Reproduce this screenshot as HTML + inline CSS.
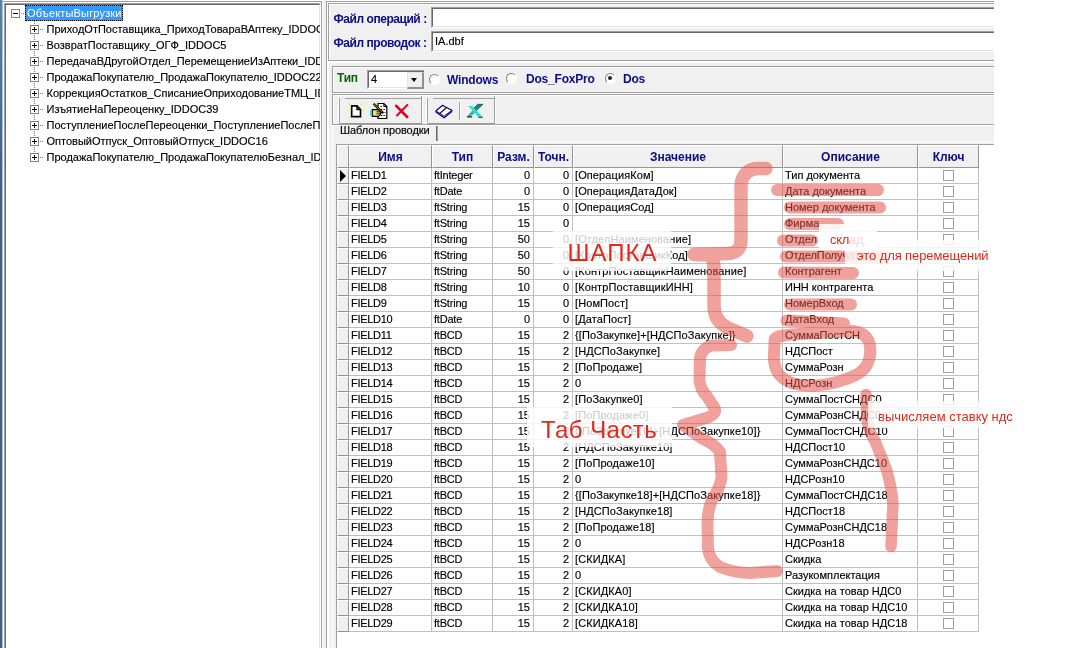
<!DOCTYPE html>
<html><head><meta charset="utf-8"><title>Export objects</title>
<style>
*{box-sizing:border-box}
html,body{margin:0;padding:0}
body{width:1070px;height:648px;position:relative;overflow:hidden;background:#fff;font-family:"Liberation Sans",sans-serif;font-size:11px;color:#000}
div,i,span{position:absolute}
i{display:block}
.strip{left:0;top:0;width:2px;height:648px;background:linear-gradient(#5a84ab,#3d6182 30%)}
.strip2{left:2px;top:0;width:1px;height:648px;background:#a9bfd2}
/* frame around tree */
.lframe{left:3px;top:1px;width:319px;height:660px;border-top:1px solid #a0a0a0;border-right:1px solid #a0a0a0}
.tree{left:4px;top:3px;width:317px;height:660px;border-top:1px solid #a0a0a0;border-left:1px solid #a0a0a0;border-right:1px solid #fff;background:#fff;overflow:hidden}
.tree:before{content:"";position:absolute;left:0;top:0;right:0;bottom:0;border-top:1px solid #696969;border-left:1px solid #696969;border-right:1px solid #e3e3e3}
/* inside tree coords are page coords minus (5,4) -> we offset children by wrapper */
.tree>div{margin-left:-5px;margin-top:-4px}
.box{width:9px;height:9px;border:1px solid #848484;background:#fff}
.box .h{left:1px;top:3px;width:5px;height:1px;background:#000}
.box .v{left:3px;top:1px;width:1px;height:5px;background:#000}
.hdots{height:1px;background-image:linear-gradient(90deg,#808080 50%,transparent 50%);background-size:2px 1px}
.vdots{width:1px;background-image:linear-gradient(#808080 50%,transparent 50%);background-size:1px 2px}
.ti{left:46.5px;height:16px;line-height:16px;white-space:nowrap}
.sel{height:16px;line-height:14px;padding:0 2px 0 1px;background:#3399ff;color:#fff;border:1px dotted #000;white-space:nowrap;width:98px;letter-spacing:0.17px}
/* right */
.rframe{left:326px;top:1px;width:668px;height:660px;border-top:1px solid #a0a0a0;border-left:1px solid #a0a0a0;background:#fff}
.rbg{left:329px;top:63px;width:665px;height:600px;background:#f0f0f0}
.p1{left:328px;top:3px;width:666px;height:58px;background:#f0f0f0;border-top:1px solid #a0a0a0;border-left:1px solid #a0a0a0;border-bottom:1px solid #a0a0a0}
.p1:before,.p2:before,.p3:before{content:"";position:absolute;left:0;top:0;right:0;bottom:0;border-top:1px solid #fff;border-left:1px solid #fff}
.p2{left:332px;top:66px;width:662px;height:27px;background:#f0f0f0;border-top:1px solid #a0a0a0;border-left:1px solid #a0a0a0;border-bottom:1px solid #a0a0a0}
.p3{left:332px;top:94px;width:662px;height:31px;background:#f0f0f0;border-top:1px solid #a0a0a0;border-left:1px solid #a0a0a0;border-bottom:1px solid #a0a0a0}
.split{left:323px;top:0;width:3px;height:648px;background:#f0f0f0}
.lbl{font-weight:bold;font-size:12px;color:#0c0c84;white-space:nowrap;letter-spacing:-0.45px;line-height:14px}
.inp{background:#fff;border-top:1px solid #a0a0a0;border-left:1px solid #a0a0a0;border-bottom:1px solid #fff;height:21px}
.inp:before{content:"";position:absolute;left:0;top:0;right:0;bottom:0;border-top:1px solid #696969;border-left:1px solid #696969;border-bottom:1px solid #e3e3e3}
.inp span{left:3px;top:3px;line-height:13px;white-space:nowrap}
.radio{width:11px;height:11px;border-radius:50%;background:#fff;border:1.5px solid #fbfbfb;border-top-color:#868686;border-left-color:#868686;transform:rotate(0deg)}
.radio.on:after{content:"";position:absolute;left:2px;top:2px;width:4px;height:4px;border-radius:50%;background:#222}
.vline{width:1px;background:#a0a0a0}
.hline{height:1px;background:#a0a0a0}
/* tabs */
.tabtxt{left:340px;top:123px;line-height:14px;white-space:nowrap;letter-spacing:-0.1px}
/* grid */
.grid{left:0;top:0;width:0;height:0}
.gridbg{left:336px;top:144px;width:658px;height:520px;background:#fff;border-top:1px solid #a0a0a0;border-left:1px solid #a0a0a0}
.hc{top:145px;height:23px;background:#f0f0f0;border-right:1px solid #949494;border-bottom:1px solid #949494;border-top:1px solid #fff;border-left:1px solid #fff;font-weight:bold;font-size:12px;color:#0c0c84;text-align:center;line-height:23px;white-space:nowrap}
.row{left:0;height:16px;width:994px}
.ind{top:0;height:16px;background:#f0f0f0;border-right:1px solid #949494;border-bottom:1px solid #949494;border-left:1px solid #fff;border-top:1px solid #fff}
.arr{left:2px;top:1px;width:0;height:0;border-left:6px solid #000;border-top:6px solid transparent;border-bottom:6px solid transparent}
.c{top:0;height:16px;border-right:1px solid #c0c0c0;border-bottom:1px solid #c0c0c0;overflow:hidden;white-space:nowrap;line-height:15px}
.c span{position:static}
.c.l{padding-left:2px}
.c.n{letter-spacing:-0.3px}
.c.t{letter-spacing:-0.2px}
.c.v{letter-spacing:0.1px}
.c.r{text-align:right;padding-right:3px}
.c.l{text-align:left}
.cb{left:25px;top:2px;width:11px;height:11px;border:1px solid #a0a0a0;background:#fff}
.note{color:#e2281c;white-space:nowrap;line-height:1.2}
#app{left:0;top:0;width:1070px;height:648px;overflow:hidden;will-change:transform}
.ti,.c,.tabtxt,.inp span{-webkit-text-stroke:0.15px #000}

</style></head><body><div id="app">

<div class="strip"></div><div class="strip2"></div>
<div class="lframe"></div>
<div class="tree">
<div class="vdots" style="left:34px;top:21px;height:137px"></div>
<div class="box" style="left:11px;top:9px"><i class="h"></i></div>
<div class="hdots" style="left:21px;top:13px;width:4px"></div>
<div class="sel" style="left:25px;top:5px">ОбъектыВыгрузки</div>
<div class="box" style="left:30px;top:25px"><i class="h"></i><i class="v"></i></div>
<div class="hdots" style="left:40px;top:29px;width:4px"></div>
<div class="ti" style="top:21px">ПриходОтПоставщика_ПриходТовараВАптеку_IDDOC11</div>
<div class="box" style="left:30px;top:41px"><i class="h"></i><i class="v"></i></div>
<div class="hdots" style="left:40px;top:45px;width:4px"></div>
<div class="ti" style="top:37px">ВозвратПоставщику_ОГФ_IDDOC5</div>
<div class="box" style="left:30px;top:57px"><i class="h"></i><i class="v"></i></div>
<div class="hdots" style="left:40px;top:61px;width:4px"></div>
<div class="ti" style="top:53px">ПередачаВДругойОтдел_ПеремещениеИзАптеки_IDDOC</div>
<div class="box" style="left:30px;top:73px"><i class="h"></i><i class="v"></i></div>
<div class="hdots" style="left:40px;top:77px;width:4px"></div>
<div class="ti" style="top:69px">ПродажаПокупателю_ПродажаПокупателю_IDDOC22</div>
<div class="box" style="left:30px;top:89px"><i class="h"></i><i class="v"></i></div>
<div class="hdots" style="left:40px;top:93px;width:4px"></div>
<div class="ti" style="top:85px">КоррекцияОстатков_СписаниеОприходованиеТМЦ_IDDOC</div>
<div class="box" style="left:30px;top:105px"><i class="h"></i><i class="v"></i></div>
<div class="hdots" style="left:40px;top:109px;width:4px"></div>
<div class="ti" style="top:101px">ИзъятиеНаПереоценку_IDDOC39</div>
<div class="box" style="left:30px;top:121px"><i class="h"></i><i class="v"></i></div>
<div class="hdots" style="left:40px;top:125px;width:4px"></div>
<div class="ti" style="top:117px">ПоступлениеПослеПереоценки_ПоступлениеПослеПереоценки</div>
<div class="box" style="left:30px;top:137px"><i class="h"></i><i class="v"></i></div>
<div class="hdots" style="left:40px;top:141px;width:4px"></div>
<div class="ti" style="top:133px">ОптовыйОтпуск_ОптовыйОтпуск_IDDOC16</div>
<div class="box" style="left:30px;top:153px"><i class="h"></i><i class="v"></i></div>
<div class="hdots" style="left:40px;top:157px;width:4px"></div>
<div class="ti" style="top:149px">ПродажаПокупателю_ПродажаПокупателюБезнал_IDDOC</div>
</div>
<div class="split"></div>
<div class="rframe"></div>
<div class="rbg"></div>
<div class="p1"></div>
<div class="lbl" style="left:333.5px;top:12px">Файл операций :</div>
<div class="lbl" style="left:333.5px;top:36px">Файл проводок :</div>
<div class="inp" style="left:431px;top:7px;width:563px"></div>
<div class="inp" style="left:431px;top:31px;width:563px"><span>IA.dbf</span></div>
<div class="p2"></div>
<div class="lbl" style="left:337px;top:71px;color:#006800;letter-spacing:-0.2px">Тип</div>
<div class="inp" style="left:367px;top:70px;width:57px;height:19px"><span style="left:3px;top:2px">4</span>
 <div style="left:39px;top:1px;width:17px;height:17px;background:#f0f0f0;border:1px solid #e3e3e3;border-right:2px solid #909090;border-bottom:2px solid #909090"><i style="left:3px;top:5px;width:0;height:0;border-top:4px solid #000;border-left:3.5px solid transparent;border-right:3.5px solid transparent"></i></div>
</div>
<div class="radio" style="left:429px;top:73.5px"></div>
<div class="lbl" style="left:447px;top:73px;letter-spacing:-0.2px">Windows</div>
<div class="radio" style="left:506px;top:72.5px"></div>
<div class="lbl" style="left:526px;top:72px;letter-spacing:-0.2px">Dos_FoxPro</div>
<div class="radio on" style="left:605px;top:72.5px"></div>
<div class="lbl" style="left:623px;top:72px;letter-spacing:-0.2px">Dos</div>
<div class="hline" style="left:332px;top:93px;width:662px;background:#fff"></div>
<div class="p3"></div>
<div class="hline" style="left:333px;top:125px;width:661px;background:#fff"></div>
<div class="hline" style="left:339px;top:123px;width:83px;background:#989898"></div>
<div class="hline" style="left:427px;top:123px;width:68px;background:#989898"></div>
<!-- toolbar group 1 -->
<div class="vline" style="left:338px;top:98px;height:24px;background:#fff"></div>
<div class="vline" style="left:339px;top:98px;height:24px"></div>
<div class="hline" style="left:345px;top:98px;width:76px"></div>
<div class="vline" style="left:421px;top:96px;height:27px"></div>
<div class="vline" style="left:422px;top:96px;height:27px;background:#fff"></div>
<!-- toolbar group 2 -->
<div class="vline" style="left:426px;top:98px;height:24px;background:#fff"></div>
<div class="vline" style="left:427px;top:98px;height:24px"></div>
<div class="hline" style="left:433px;top:98px;width:61px"></div>
<div class="vline" style="left:494px;top:96px;height:27px"></div>
<div class="vline" style="left:495px;top:96px;height:27px;background:#fff"></div>
<div class="vline" style="left:459px;top:102px;height:18px"></div>
<div class="vline" style="left:460px;top:102px;height:18px;background:#fff"></div>
<!-- icons -->
<svg style="position:absolute;left:344px;top:98px" width="150" height="26" viewBox="344 98 150 26">
 <!-- new doc -->
 <g stroke="#eaf27a" stroke-width="1.6" stroke-linecap="round" opacity=".85"><path d="M348.600 103l2 2.200M362.800 103l-2.200 2.600M347.300 110.500h2.600M362.300 110.500h2M349 118l1.500-1.500M362 117.500l.8 .8"/></g>
 <path d="M351.700 105.900h5.300l3.500 3.700v7h-8.800z" fill="#fff" stroke="#000" stroke-width="1.600" stroke-linejoin="miter"/>
 <path d="M357 105.900v3.700h3.500" fill="none" stroke="#000" stroke-width="1.400"/>
 <!-- edit doc -->
 <path d="M378 103.500h5.800l3 3v12h-8.800z" fill="#fff" stroke="#000" stroke-width="1.200"/>
 <path d="M383.800 103.500v3h3" fill="none" stroke="#000" stroke-width="1"/>
 <path d="M380.500 106.500h2M381 109.500h4.500M382 112.500h3.500M381 115.500h4.500" stroke="#000" stroke-width="1" stroke-dasharray="1.300 1.200"/>
 <path d="M372.300 109.600h5.700l2.600 1.600v3.200l-2 2h-6.300z" fill="#e8e27c" stroke="#000" stroke-width="1.100"/>
 <path d="M376.500 111.800h4M376.500 113.800h4" stroke="#000" stroke-width=".9"/>
 <path d="M371 110v5.800" stroke="#38d8d8" stroke-width="1.800"/>
 <path d="M373.600 103.700l9.600 9.400" stroke="#000" stroke-width="2.300"/>
 <path d="M374.200 104.200l8 7.800" stroke="#c8b020" stroke-width=".8"/>
 <!-- red X -->
 <path d="M396.200 105.800l11 11.200" stroke="#e0001c" stroke-width="2.600" stroke-linecap="round"/>
 <path d="M407.400 104.900l-10.400 10.600" stroke="#e0001c" stroke-width="2" stroke-linecap="round"/>
 <!-- book -->
 <path d="M436 110.800l6.700-5.500l1.500 1l7.600 3.900v1.300l-7.700 6.200l-8.100-5.600z" fill="#fff" stroke="#00007c" stroke-width="1.200" stroke-linejoin="round"/>
 <path d="M436 110.800l8.100 5.400l7.700-6" fill="none" stroke="#00007c" stroke-width=".9"/>
 <path d="M446.600 107.500l-6.800 5.900" stroke="#000" stroke-width="1.100"/>
 <!-- excel -->
 <path d="M477.700 104.300h5.300l-6.800 6.400l-2.700-2.300z" fill="#168c84" stroke="#0a4a46" stroke-width=".7"/>
 <path d="M472.600 110.200l2.400 2.200l-4.400 4.200h-3.600z" fill="#2cb4aa"/>
 <path d="M468.200 106l3.800 0l10.600 10.800h-4.300z" fill="#22e4d6"/>
 <path d="M467 116.900h5.200M478.200 117.300h4.600" stroke="#04302c" stroke-width="1.100"/>
</svg>
<!-- tab -->
<div class="vline" style="left:332px;top:125px;height:540px;background:#fff"></div>
<div class="tabtxt">Шаблон проводки</div>
<div class="vline" style="left:436px;top:126px;height:15px;background:#696969"></div>
<div class="vline" style="left:437px;top:126px;height:15px;background:#a0a0a0"></div>
<div class="hline" style="left:438px;top:141px;width:556px;background:#fff"></div>
<div class="gridbg"></div>

<div class="grid">
<div class="hc" style="left:337px;width:12px"></div>
<div class="hc" style="left:349px;width:83px">Имя</div>
<div class="hc" style="left:432px;width:61px">Тип</div>
<div class="hc" style="left:493px;width:41px">Разм.</div>
<div class="hc" style="left:534px;width:39px">Точн.</div>
<div class="hc" style="left:573px;width:210px">Значение</div>
<div class="hc" style="left:783px;width:135px">Описание</div>
<div class="hc" style="left:918px;width:61px">Ключ</div>
<div class="row" style="top:168px">
<div class="ind" style="left:337px;width:12px"><i class="arr"></i></div>
<div class="c l n" style="left:349px;width:83px"><span>FIELD1</span></div>
<div class="c l t" style="left:432px;width:61px"><span>ftInteger</span></div>
<div class="c r" style="left:493px;width:41px"><span>0</span></div>
<div class="c r" style="left:534px;width:39px"><span>0</span></div>
<div class="c l v" style="left:573px;width:210px"><span>[ОперацияКом]</span></div>
<div class="c l d" style="left:783px;width:135px"><span>Тип документа</span></div>
<div class="c k" style="left:918px;width:61px"><i class="cb"></i></div>
</div>
<div class="row" style="top:184px">
<div class="ind" style="left:337px;width:12px"></div>
<div class="c l n" style="left:349px;width:83px"><span>FIELD2</span></div>
<div class="c l t" style="left:432px;width:61px"><span>ftDate</span></div>
<div class="c r" style="left:493px;width:41px"><span>0</span></div>
<div class="c r" style="left:534px;width:39px"><span>0</span></div>
<div class="c l v" style="left:573px;width:210px"><span>[ОперацияДатаДок]</span></div>
<div class="c l d" style="left:783px;width:135px"><span>Дата документа</span></div>
<div class="c k" style="left:918px;width:61px"><i class="cb"></i></div>
</div>
<div class="row" style="top:200px">
<div class="ind" style="left:337px;width:12px"></div>
<div class="c l n" style="left:349px;width:83px"><span>FIELD3</span></div>
<div class="c l t" style="left:432px;width:61px"><span>ftString</span></div>
<div class="c r" style="left:493px;width:41px"><span>15</span></div>
<div class="c r" style="left:534px;width:39px"><span>0</span></div>
<div class="c l v" style="left:573px;width:210px"><span>[ОперацияСод]</span></div>
<div class="c l d" style="left:783px;width:135px"><span>Номер документа</span></div>
<div class="c k" style="left:918px;width:61px"><i class="cb"></i></div>
</div>
<div class="row" style="top:216px">
<div class="ind" style="left:337px;width:12px"></div>
<div class="c l n" style="left:349px;width:83px"><span>FIELD4</span></div>
<div class="c l t" style="left:432px;width:61px"><span>ftString</span></div>
<div class="c r" style="left:493px;width:41px"><span>15</span></div>
<div class="c r" style="left:534px;width:39px"><span>0</span></div>
<div class="c l v" style="left:573px;width:210px"><span></span></div>
<div class="c l d" style="left:783px;width:135px"><span>Фирма</span></div>
<div class="c k" style="left:918px;width:61px"><i class="cb"></i></div>
</div>
<div class="row" style="top:232px">
<div class="ind" style="left:337px;width:12px"></div>
<div class="c l n" style="left:349px;width:83px"><span>FIELD5</span></div>
<div class="c l t" style="left:432px;width:61px"><span>ftString</span></div>
<div class="c r" style="left:493px;width:41px"><span>50</span></div>
<div class="c r" style="left:534px;width:39px"><span>0</span></div>
<div class="c l v" style="left:573px;width:210px"><span>[ОтделНаименование]</span></div>
<div class="c l d" style="left:783px;width:135px"><span>Отдел</span></div>
<div class="c k" style="left:918px;width:61px"><i class="cb"></i></div>
</div>
<div class="row" style="top:248px">
<div class="ind" style="left:337px;width:12px"></div>
<div class="c l n" style="left:349px;width:83px"><span>FIELD6</span></div>
<div class="c l t" style="left:432px;width:61px"><span>ftString</span></div>
<div class="c r" style="left:493px;width:41px"><span>50</span></div>
<div class="c r" style="left:534px;width:39px"><span>0</span></div>
<div class="c l v" style="left:573px;width:210px"><span>[КонтрПоставщикКод]</span></div>
<div class="c l d" style="left:783px;width:135px"><span>ОтделПолучатель</span></div>
<div class="c k" style="left:918px;width:61px"><i class="cb"></i></div>
</div>
<div class="row" style="top:264px">
<div class="ind" style="left:337px;width:12px"></div>
<div class="c l n" style="left:349px;width:83px"><span>FIELD7</span></div>
<div class="c l t" style="left:432px;width:61px"><span>ftString</span></div>
<div class="c r" style="left:493px;width:41px"><span>50</span></div>
<div class="c r" style="left:534px;width:39px"><span>0</span></div>
<div class="c l v" style="left:573px;width:210px"><span>[КонтрПоставщикНаименование]</span></div>
<div class="c l d" style="left:783px;width:135px"><span>Контрагент</span></div>
<div class="c k" style="left:918px;width:61px"><i class="cb"></i></div>
</div>
<div class="row" style="top:280px">
<div class="ind" style="left:337px;width:12px"></div>
<div class="c l n" style="left:349px;width:83px"><span>FIELD8</span></div>
<div class="c l t" style="left:432px;width:61px"><span>ftString</span></div>
<div class="c r" style="left:493px;width:41px"><span>10</span></div>
<div class="c r" style="left:534px;width:39px"><span>0</span></div>
<div class="c l v" style="left:573px;width:210px"><span>[КонтрПоставщикИНН]</span></div>
<div class="c l d" style="left:783px;width:135px"><span>ИНН контрагента</span></div>
<div class="c k" style="left:918px;width:61px"><i class="cb"></i></div>
</div>
<div class="row" style="top:296px">
<div class="ind" style="left:337px;width:12px"></div>
<div class="c l n" style="left:349px;width:83px"><span>FIELD9</span></div>
<div class="c l t" style="left:432px;width:61px"><span>ftString</span></div>
<div class="c r" style="left:493px;width:41px"><span>15</span></div>
<div class="c r" style="left:534px;width:39px"><span>0</span></div>
<div class="c l v" style="left:573px;width:210px"><span>[НомПост]</span></div>
<div class="c l d" style="left:783px;width:135px"><span>НомерВход</span></div>
<div class="c k" style="left:918px;width:61px"><i class="cb"></i></div>
</div>
<div class="row" style="top:312px">
<div class="ind" style="left:337px;width:12px"></div>
<div class="c l n" style="left:349px;width:83px"><span>FIELD10</span></div>
<div class="c l t" style="left:432px;width:61px"><span>ftDate</span></div>
<div class="c r" style="left:493px;width:41px"><span>0</span></div>
<div class="c r" style="left:534px;width:39px"><span>0</span></div>
<div class="c l v" style="left:573px;width:210px"><span>[ДатаПост]</span></div>
<div class="c l d" style="left:783px;width:135px"><span>ДатаВход</span></div>
<div class="c k" style="left:918px;width:61px"><i class="cb"></i></div>
</div>
<div class="row" style="top:328px">
<div class="ind" style="left:337px;width:12px"></div>
<div class="c l n" style="left:349px;width:83px"><span>FIELD11</span></div>
<div class="c l t" style="left:432px;width:61px"><span>ftBCD</span></div>
<div class="c r" style="left:493px;width:41px"><span>15</span></div>
<div class="c r" style="left:534px;width:39px"><span>2</span></div>
<div class="c l v" style="left:573px;width:210px"><span>{[ПоЗакупке]+[НДСПоЗакупке]}</span></div>
<div class="c l d" style="left:783px;width:135px"><span>СуммаПостСН</span></div>
<div class="c k" style="left:918px;width:61px"><i class="cb"></i></div>
</div>
<div class="row" style="top:344px">
<div class="ind" style="left:337px;width:12px"></div>
<div class="c l n" style="left:349px;width:83px"><span>FIELD12</span></div>
<div class="c l t" style="left:432px;width:61px"><span>ftBCD</span></div>
<div class="c r" style="left:493px;width:41px"><span>15</span></div>
<div class="c r" style="left:534px;width:39px"><span>2</span></div>
<div class="c l v" style="left:573px;width:210px"><span>[НДСПоЗакупке]</span></div>
<div class="c l d" style="left:783px;width:135px"><span>НДСПост</span></div>
<div class="c k" style="left:918px;width:61px"><i class="cb"></i></div>
</div>
<div class="row" style="top:360px">
<div class="ind" style="left:337px;width:12px"></div>
<div class="c l n" style="left:349px;width:83px"><span>FIELD13</span></div>
<div class="c l t" style="left:432px;width:61px"><span>ftBCD</span></div>
<div class="c r" style="left:493px;width:41px"><span>15</span></div>
<div class="c r" style="left:534px;width:39px"><span>2</span></div>
<div class="c l v" style="left:573px;width:210px"><span>[ПоПродаже]</span></div>
<div class="c l d" style="left:783px;width:135px"><span>СуммаРозн</span></div>
<div class="c k" style="left:918px;width:61px"><i class="cb"></i></div>
</div>
<div class="row" style="top:376px">
<div class="ind" style="left:337px;width:12px"></div>
<div class="c l n" style="left:349px;width:83px"><span>FIELD14</span></div>
<div class="c l t" style="left:432px;width:61px"><span>ftBCD</span></div>
<div class="c r" style="left:493px;width:41px"><span>15</span></div>
<div class="c r" style="left:534px;width:39px"><span>2</span></div>
<div class="c l v" style="left:573px;width:210px"><span>0</span></div>
<div class="c l d" style="left:783px;width:135px"><span>НДСРозн</span></div>
<div class="c k" style="left:918px;width:61px"><i class="cb"></i></div>
</div>
<div class="row" style="top:392px">
<div class="ind" style="left:337px;width:12px"></div>
<div class="c l n" style="left:349px;width:83px"><span>FIELD15</span></div>
<div class="c l t" style="left:432px;width:61px"><span>ftBCD</span></div>
<div class="c r" style="left:493px;width:41px"><span>15</span></div>
<div class="c r" style="left:534px;width:39px"><span>2</span></div>
<div class="c l v" style="left:573px;width:210px"><span>[ПоЗакупке0]</span></div>
<div class="c l d" style="left:783px;width:135px"><span>СуммаПостСНДС0</span></div>
<div class="c k" style="left:918px;width:61px"><i class="cb"></i></div>
</div>
<div class="row" style="top:408px">
<div class="ind" style="left:337px;width:12px"></div>
<div class="c l n" style="left:349px;width:83px"><span>FIELD16</span></div>
<div class="c l t" style="left:432px;width:61px"><span>ftBCD</span></div>
<div class="c r" style="left:493px;width:41px"><span>15</span></div>
<div class="c r" style="left:534px;width:39px"><span>2</span></div>
<div class="c l v" style="left:573px;width:210px"><span>[ПоПродаже0]</span></div>
<div class="c l d" style="left:783px;width:135px"><span>СуммаРознСНДС0</span></div>
<div class="c k" style="left:918px;width:61px"><i class="cb"></i></div>
</div>
<div class="row" style="top:424px">
<div class="ind" style="left:337px;width:12px"></div>
<div class="c l n" style="left:349px;width:83px"><span>FIELD17</span></div>
<div class="c l t" style="left:432px;width:61px"><span>ftBCD</span></div>
<div class="c r" style="left:493px;width:41px"><span>15</span></div>
<div class="c r" style="left:534px;width:39px"><span>2</span></div>
<div class="c l v" style="left:573px;width:210px"><span>{[ПоЗакупке10]+[НДСПоЗакупке10]}</span></div>
<div class="c l d" style="left:783px;width:135px"><span>СуммаПостСНДС10</span></div>
<div class="c k" style="left:918px;width:61px"><i class="cb"></i></div>
</div>
<div class="row" style="top:440px">
<div class="ind" style="left:337px;width:12px"></div>
<div class="c l n" style="left:349px;width:83px"><span>FIELD18</span></div>
<div class="c l t" style="left:432px;width:61px"><span>ftBCD</span></div>
<div class="c r" style="left:493px;width:41px"><span>15</span></div>
<div class="c r" style="left:534px;width:39px"><span>2</span></div>
<div class="c l v" style="left:573px;width:210px"><span>[НДСПоЗакупке10]</span></div>
<div class="c l d" style="left:783px;width:135px"><span>НДСПост10</span></div>
<div class="c k" style="left:918px;width:61px"><i class="cb"></i></div>
</div>
<div class="row" style="top:456px">
<div class="ind" style="left:337px;width:12px"></div>
<div class="c l n" style="left:349px;width:83px"><span>FIELD19</span></div>
<div class="c l t" style="left:432px;width:61px"><span>ftBCD</span></div>
<div class="c r" style="left:493px;width:41px"><span>15</span></div>
<div class="c r" style="left:534px;width:39px"><span>2</span></div>
<div class="c l v" style="left:573px;width:210px"><span>[ПоПродаже10]</span></div>
<div class="c l d" style="left:783px;width:135px"><span>СуммаРознСНДС10</span></div>
<div class="c k" style="left:918px;width:61px"><i class="cb"></i></div>
</div>
<div class="row" style="top:472px">
<div class="ind" style="left:337px;width:12px"></div>
<div class="c l n" style="left:349px;width:83px"><span>FIELD20</span></div>
<div class="c l t" style="left:432px;width:61px"><span>ftBCD</span></div>
<div class="c r" style="left:493px;width:41px"><span>15</span></div>
<div class="c r" style="left:534px;width:39px"><span>2</span></div>
<div class="c l v" style="left:573px;width:210px"><span>0</span></div>
<div class="c l d" style="left:783px;width:135px"><span>НДСРозн10</span></div>
<div class="c k" style="left:918px;width:61px"><i class="cb"></i></div>
</div>
<div class="row" style="top:488px">
<div class="ind" style="left:337px;width:12px"></div>
<div class="c l n" style="left:349px;width:83px"><span>FIELD21</span></div>
<div class="c l t" style="left:432px;width:61px"><span>ftBCD</span></div>
<div class="c r" style="left:493px;width:41px"><span>15</span></div>
<div class="c r" style="left:534px;width:39px"><span>2</span></div>
<div class="c l v" style="left:573px;width:210px"><span>{[ПоЗакупке18]+[НДСПоЗакупке18]}</span></div>
<div class="c l d" style="left:783px;width:135px"><span>СуммаПостСНДС18</span></div>
<div class="c k" style="left:918px;width:61px"><i class="cb"></i></div>
</div>
<div class="row" style="top:504px">
<div class="ind" style="left:337px;width:12px"></div>
<div class="c l n" style="left:349px;width:83px"><span>FIELD22</span></div>
<div class="c l t" style="left:432px;width:61px"><span>ftBCD</span></div>
<div class="c r" style="left:493px;width:41px"><span>15</span></div>
<div class="c r" style="left:534px;width:39px"><span>2</span></div>
<div class="c l v" style="left:573px;width:210px"><span>[НДСПоЗакупке18]</span></div>
<div class="c l d" style="left:783px;width:135px"><span>НДСПост18</span></div>
<div class="c k" style="left:918px;width:61px"><i class="cb"></i></div>
</div>
<div class="row" style="top:520px">
<div class="ind" style="left:337px;width:12px"></div>
<div class="c l n" style="left:349px;width:83px"><span>FIELD23</span></div>
<div class="c l t" style="left:432px;width:61px"><span>ftBCD</span></div>
<div class="c r" style="left:493px;width:41px"><span>15</span></div>
<div class="c r" style="left:534px;width:39px"><span>2</span></div>
<div class="c l v" style="left:573px;width:210px"><span>[ПоПродаже18]</span></div>
<div class="c l d" style="left:783px;width:135px"><span>СуммаРознСНДС18</span></div>
<div class="c k" style="left:918px;width:61px"><i class="cb"></i></div>
</div>
<div class="row" style="top:536px">
<div class="ind" style="left:337px;width:12px"></div>
<div class="c l n" style="left:349px;width:83px"><span>FIELD24</span></div>
<div class="c l t" style="left:432px;width:61px"><span>ftBCD</span></div>
<div class="c r" style="left:493px;width:41px"><span>15</span></div>
<div class="c r" style="left:534px;width:39px"><span>2</span></div>
<div class="c l v" style="left:573px;width:210px"><span>0</span></div>
<div class="c l d" style="left:783px;width:135px"><span>НДСРозн18</span></div>
<div class="c k" style="left:918px;width:61px"><i class="cb"></i></div>
</div>
<div class="row" style="top:552px">
<div class="ind" style="left:337px;width:12px"></div>
<div class="c l n" style="left:349px;width:83px"><span>FIELD25</span></div>
<div class="c l t" style="left:432px;width:61px"><span>ftBCD</span></div>
<div class="c r" style="left:493px;width:41px"><span>15</span></div>
<div class="c r" style="left:534px;width:39px"><span>2</span></div>
<div class="c l v" style="left:573px;width:210px"><span>[СКИДКА]</span></div>
<div class="c l d" style="left:783px;width:135px"><span>Скидка</span></div>
<div class="c k" style="left:918px;width:61px"><i class="cb"></i></div>
</div>
<div class="row" style="top:568px">
<div class="ind" style="left:337px;width:12px"></div>
<div class="c l n" style="left:349px;width:83px"><span>FIELD26</span></div>
<div class="c l t" style="left:432px;width:61px"><span>ftBCD</span></div>
<div class="c r" style="left:493px;width:41px"><span>15</span></div>
<div class="c r" style="left:534px;width:39px"><span>2</span></div>
<div class="c l v" style="left:573px;width:210px"><span>0</span></div>
<div class="c l d" style="left:783px;width:135px"><span>Разукомплектация</span></div>
<div class="c k" style="left:918px;width:61px"><i class="cb"></i></div>
</div>
<div class="row" style="top:584px">
<div class="ind" style="left:337px;width:12px"></div>
<div class="c l n" style="left:349px;width:83px"><span>FIELD27</span></div>
<div class="c l t" style="left:432px;width:61px"><span>ftBCD</span></div>
<div class="c r" style="left:493px;width:41px"><span>15</span></div>
<div class="c r" style="left:534px;width:39px"><span>2</span></div>
<div class="c l v" style="left:573px;width:210px"><span>[СКИДКА0]</span></div>
<div class="c l d" style="left:783px;width:135px"><span>Скидка на товар НДС0</span></div>
<div class="c k" style="left:918px;width:61px"><i class="cb"></i></div>
</div>
<div class="row" style="top:600px">
<div class="ind" style="left:337px;width:12px"></div>
<div class="c l n" style="left:349px;width:83px"><span>FIELD28</span></div>
<div class="c l t" style="left:432px;width:61px"><span>ftBCD</span></div>
<div class="c r" style="left:493px;width:41px"><span>15</span></div>
<div class="c r" style="left:534px;width:39px"><span>2</span></div>
<div class="c l v" style="left:573px;width:210px"><span>[СКИДКА10]</span></div>
<div class="c l d" style="left:783px;width:135px"><span>Скидка на товар НДС10</span></div>
<div class="c k" style="left:918px;width:61px"><i class="cb"></i></div>
</div>
<div class="row" style="top:616px">
<div class="ind" style="left:337px;width:12px"></div>
<div class="c l n" style="left:349px;width:83px"><span>FIELD29</span></div>
<div class="c l t" style="left:432px;width:61px"><span>ftBCD</span></div>
<div class="c r" style="left:493px;width:41px"><span>15</span></div>
<div class="c r" style="left:534px;width:39px"><span>2</span></div>
<div class="c l v" style="left:573px;width:210px"><span>[СКИДКА18]</span></div>
<div class="c l d" style="left:783px;width:135px"><span>Скидка на товар НДС18</span></div>
<div class="c k" style="left:918px;width:61px"><i class="cb"></i></div>
</div>
</div>
<svg style="position:absolute;left:0;top:0" width="1070" height="648" viewBox="0 0 1070 648">
<g fill="none" stroke="#e4554a" stroke-linecap="round" stroke-linejoin="round" opacity="0.55">
 <!-- brace 1 -->
 <path stroke-width="13.5" d="M766 168.500 L757 168.500 Q742 170 741 186 L741 240 Q741 253 728 253.500 L694 254.500 L708 255 Q714 258 714 268 L714 306 Q714 321 728 328 L747 336"/>
 <!-- brace 2 -->
 <path stroke-width="12" d="M731 345 L712 345.500 Q702 348 700 358 L699.500 381 Q701 390 706 395 L714 407 Q718 413 708 417.500 Q696 421 683 425 Q694 433 702 438.500 Q715 444 720 452 L721.500 478 Q719 490 712 500 Q707 512 707.500 525 L708 548 Q709 560 720 567 Q735 573 750 573 L777 571"/>
 <!-- highlights -->
 <path stroke-width="12" d="M777 190 L878 190"/>
 <path stroke-width="12" d="M790 207.500 L880 207.500"/>
 <path stroke-width="12" d="M790 224 L838 224"/>
 <path stroke-width="12" d="M783 240.500 L812 240.500"/>
 <path stroke-width="12" d="M786 256.500 L885 256.500"/>
 <path stroke-width="12" d="M784 272.500 L853 273"/>
 <path stroke-width="12" d="M790 304.500 L851 304.500"/>
 <!-- loop -->
 <path stroke-width="12" d="M786.500 320.500 L844 323.500"/>
 <path stroke-width="12" d="M774.600 342 Q774 338 778 336.500 L792 334.400 L825 332.600 L849 331 Q859 331 864 335 Q870 340 870.200 348.500 Q871 356 867.800 363 Q865 370 857 374.400 Q848 379 838 381.700 Q826 385 813.500 385.800 Q802 386 792.400 383.300 Q783 380 777.800 372.800 Q774 366 773.800 356.600 Z"/>
 <!-- right squiggle -->
 <path stroke-width="11.5" d="M866 394.500 L867 420 Q870 434 875 441 L887 471 Q892 490 893 504 L891 546.500"/>
</g>
</svg>
<div style="left:553px;top:231px;width:118px;height:40px;background:rgba(255,255,255,.8)"></div>
<div style="left:527px;top:407px;width:145px;height:40px;background:rgba(255,255,255,.8)"></div>
<div style="left:819px;top:224px;width:58px;height:25px;background:rgba(255,255,255,.88)"></div>
<div class="note" style="left:830px;top:232px;font-size:13px;letter-spacing:-.3px">склад</div>
<div style="left:850px;top:234px;width:17px;height:6px;background:rgba(255,255,255,.82)"></div>
<div style="left:850px;top:240px;width:155px;height:24px;background:rgba(255,255,255,.82)"></div>
<div style="left:845px;top:249px;width:5px;height:15px;background:rgba(255,255,255,.82)"></div>
<div style="left:900px;top:264px;width:105px;height:7px;background:rgba(255,255,255,.82)"></div>
<div style="left:868px;top:401px;width:150px;height:27px;background:rgba(255,255,255,.82)"></div>
<div class="note" style="left:567.5px;top:238.5px;font-size:24px;letter-spacing:1px">ШАПКА</div>
<div class="note" style="left:541px;top:415.5px;font-size:24px;letter-spacing:.45px">Таб Часть</div>
<div class="note" style="left:857px;top:248px;font-size:13px;letter-spacing:-.09px">это для перемещений</div>
<div class="note" style="left:878px;top:409px;font-size:13px">вычисляем ставку ндс</div>


</div></body></html>
